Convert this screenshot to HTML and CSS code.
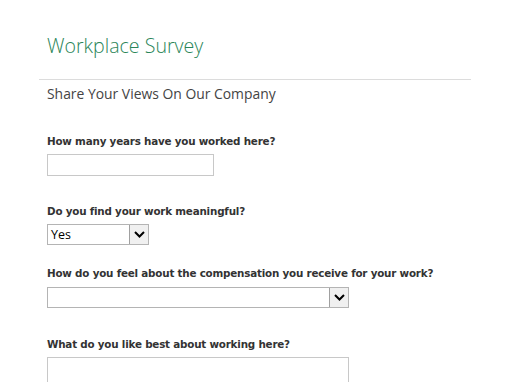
FILE: index.html
```html
<!DOCTYPE html>
<html>
<head>
<meta charset="utf-8">
<link rel="stylesheet" href="styles.css">
</head>
<body>
<div class="page">
  <h1 class="title">Workplace Survey</h1>
  <div class="rule"></div>
  <h2 class="subtitle">Share Your Views On Our Company</h2>

  <div class="q q1">
    <div class="label">How many years have you worked here?</div>
    <div class="input short"></div>
  </div>

  <div class="q q2">
    <div class="label">Do you find your work meaningful?</div>
    <div class="select small">
      <span class="value">Yes</span>
      <span class="btn"><svg width="11" height="7" viewBox="0 0 11 7"><path d="M1 1 L5.5 5.5 L10 1" fill="none" stroke="#000" stroke-width="2"/></svg></span>
    </div>
  </div>

  <div class="q q3">
    <div class="label">How do you feel about the compensation you receive for your work?</div>
    <div class="select wide">
      <span class="value"></span>
      <span class="btn"><svg width="11" height="7" viewBox="0 0 11 7"><path d="M1 1 L5.5 5.5 L10 1" fill="none" stroke="#000" stroke-width="2"/></svg></span>
    </div>
  </div>

  <div class="q q4">
    <div class="label">What do you like best about working here?</div>
    <div class="textarea"></div>
  </div>
</div>
</body>
</html>
```

FILE: styles.css
```css
html, body {
  margin: 0;
  padding: 0;
  background: #fff;
  overflow: hidden;
}
body {
  font-family: "Open Sans", "Noto Sans", sans-serif;
  color: #333;
}
.page {
  padding: 31px 40px 0 47px;
  width: 423px;
}
.title {
  margin: 0;
  font-family: "Open Sans", sans-serif;
  font-weight: 300;
  font-size: 19.6px;
  line-height: 30px;
  color: #2a8558;
}
.rule {
  height: 1px;
  background: #dcdcdc;
  margin: 18px 0 0 -8px;
  width: 432px;
}
.subtitle {
  margin: 4px 0 0 0;
  font-weight: 400;
  font-size: 13.9px;
  line-height: 20px;
  color: #444;
}
.label {
  font-family: "DejaVu Sans", sans-serif;
  font-weight: bold;
  font-size: 10.35px;
  line-height: 14px;
  color: #333;
  letter-spacing: -0.2px;
}
.q1 { margin-top: 30px; }
.q2 { margin-top: 28px; }
.q3 { margin-top: 21px; }
.q4 { margin-top: 29px; }
.input {
  margin-top: 6px;
  border: 1px solid #c8c8c8;
  box-sizing: border-box;
  height: 22px;
}
.short { width: 167px; }
.select {
  margin-top: 6px;
  border: 1px solid #b4b4b4;
  box-sizing: border-box;
  height: 21px;
  display: flex;
  align-items: stretch;
  background: #fff;
}
.select .value {
  flex: 1;
  font-family: "Open Sans", sans-serif;
  font-size: 12.5px;
  line-height: 19px;
  padding-left: 3px;
  color: #000;
}
.select .btn {
  width: 18px;
  background: #f0f0f0;
  border-left: 1px solid #a0a0a0;
  display: flex;
  align-items: center;
  justify-content: center;
}
.small { width: 102px; }
.wide { width: 302px; margin-top: 7px; }
.textarea {
  margin-top: 6px;
  border: 1px solid #c8c8c8;
  width: 302px;
  box-sizing: border-box;
  height: 40px;
}
```
